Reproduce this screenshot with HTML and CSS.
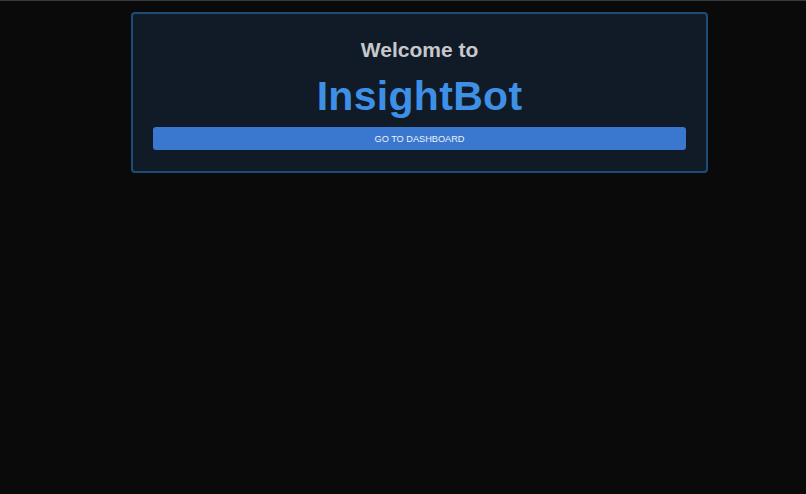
FILE: index.html
```html
<!DOCTYPE html>
<html lang="en">
<head>
<meta charset="utf-8">
<title>InsightBot</title>
<link rel="stylesheet" href="styles.css">
</head>
<body>
<main class="page">
  <section class="welcome-card">
    <h2 class="welcome-sub">Welcome to</h2>
    <h1 class="welcome-title">InsightBot</h1>
    <button class="dash-btn" type="button">GO TO DASHBOARD</button>
  </section>
</main>
</body>
</html>
```

FILE: styles.css
```css
html, body {
  margin: 0;
  padding: 0;
  background: #0a0a0a;
  height: 100%;
}
body {
  border-top: 1px solid #3a3a3a;
  box-sizing: border-box;
  font-family: "Liberation Sans", Arial, Helvetica, sans-serif;
}
.page {
  padding-top: 11px;
}
.welcome-card {
  margin-left: 131px;
  width: 577px;
  box-sizing: border-box;
  background: #101b27;
  border: 2px solid #1f4b79;
  border-radius: 4px;
  padding: 24px 20px 21px;
  text-align: center;
}
.welcome-sub {
  margin: 0;
  font-size: 21px;
  line-height: 24px;
  font-weight: 700;
  color: #c6c8cb;
}
.welcome-title {
  margin: 11px 0 8px;
  font-size: 41px;
  line-height: 46px;
  font-weight: 700;
  letter-spacing: 0.3px;
  color: #3e90e6;
}
.dash-btn {
  display: block;
  width: 100%;
  height: 23px;
  border: none;
  border-radius: 3px;
  background: #3a77cf;
  color: #eef2f9;
  font-family: "Liberation Sans", Arial, Helvetica, sans-serif;
  font-size: 9.2px;
  padding: 0;
  cursor: pointer;
}
```
